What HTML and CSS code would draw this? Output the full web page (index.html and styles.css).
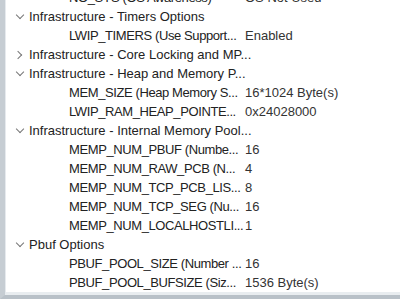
FILE: index.html
```html
<!DOCTYPE html>
<html lang="en">
<head>
  <meta charset="UTF-8">
  <title>Parameter Settings</title>
  <link rel="stylesheet" href="styles.css">
</head>
<body>
  <div class="panel">
    <div class="tree">
      <div class="row child"><span class="name">NO_SYS (OS Awareness)</span><span class="value">OS Not Used</span></div>

      <div class="row group"><span class="chev down"></span><span class="name">Infrastructure - Timers Options</span></div>
      <div class="row child"><span class="name">LWIP_TIMERS (Use Support...</span><span class="value">Enabled</span></div>

      <div class="row group"><span class="chev right"></span><span class="name">Infrastructure - Core Locking and MP...</span></div>

      <div class="row group"><span class="chev down"></span><span class="name">Infrastructure - Heap and Memory P...</span></div>
      <div class="row child"><span class="name">MEM_SIZE (Heap Memory S...</span><span class="value">16*1024 Byte(s)</span></div>
      <div class="row child"><span class="name">LWIP_RAM_HEAP_POINTE...</span><span class="value">0x24028000</span></div>

      <div class="row group"><span class="chev down"></span><span class="name">Infrastructure - Internal Memory Pool...</span></div>
      <div class="row child"><span class="name">MEMP_NUM_PBUF (Numbe...</span><span class="value">16</span></div>
      <div class="row child"><span class="name">MEMP_NUM_RAW_PCB (N...</span><span class="value">4</span></div>
      <div class="row child"><span class="name">MEMP_NUM_TCP_PCB_LIS...</span><span class="value">8</span></div>
      <div class="row child"><span class="name">MEMP_NUM_TCP_SEG (Nu...</span><span class="value">16</span></div>
      <div class="row child"><span class="name">MEMP_NUM_LOCALHOSTLI...</span><span class="value">1</span></div>

      <div class="row group"><span class="chev down"></span><span class="name">Pbuf Options</span></div>
      <div class="row child"><span class="name">PBUF_POOL_SIZE (Number ...</span><span class="value">16</span></div>
      <div class="row child"><span class="name">PBUF_POOL_BUFSIZE (Siz...</span><span class="value">1536 Byte(s)</span></div>
    </div>
  </div>
</body>
</html>
```

FILE: styles.css
```css
body {
  margin: 0;
  padding: 0;
  font-family: "Liberation Sans", Arial, sans-serif;
  font-size: 13px;
  color: #222;
  background: #fff;
}
.panel {
  height: 299px;
  overflow: hidden;
  border-left: 5px solid #c6cdd3;
  border-bottom: 4px solid #b9c1c8;
  box-sizing: border-box;
  display: flex;
  flex-direction: column;
}
.tree {
  flex: 1;
  overflow: hidden;
  margin-top: -12px;
  border-left: 1px solid #e6eaee;
  border-bottom: 3px solid #e9edf0;
}
.row {
  display: flex;
  align-items: center;
  height: 19px;
  white-space: nowrap;
}
.row .name {
  flex: none;
}
.group .name {
  margin-left: 6px;
}
.child .name {
  padding-left: 63px;
  width: 176px;
  letter-spacing: -0.4px;
}
.value {
  color: #333;
}
.chev {
  width: 17px;
  height: 19px;
  position: relative;
  flex: none;
}
.chev::before {
  content: "";
  position: absolute;
  width: 5px;
  height: 5px;
  border-right: 1px solid #777;
  border-bottom: 1px solid #777;
}
.chev.down::before {
  left: 11px;
  top: 5px;
  transform: rotate(45deg);
}
.chev.right::before {
  left: 9px;
  top: 7px;
  transform: rotate(-45deg);
}
```
